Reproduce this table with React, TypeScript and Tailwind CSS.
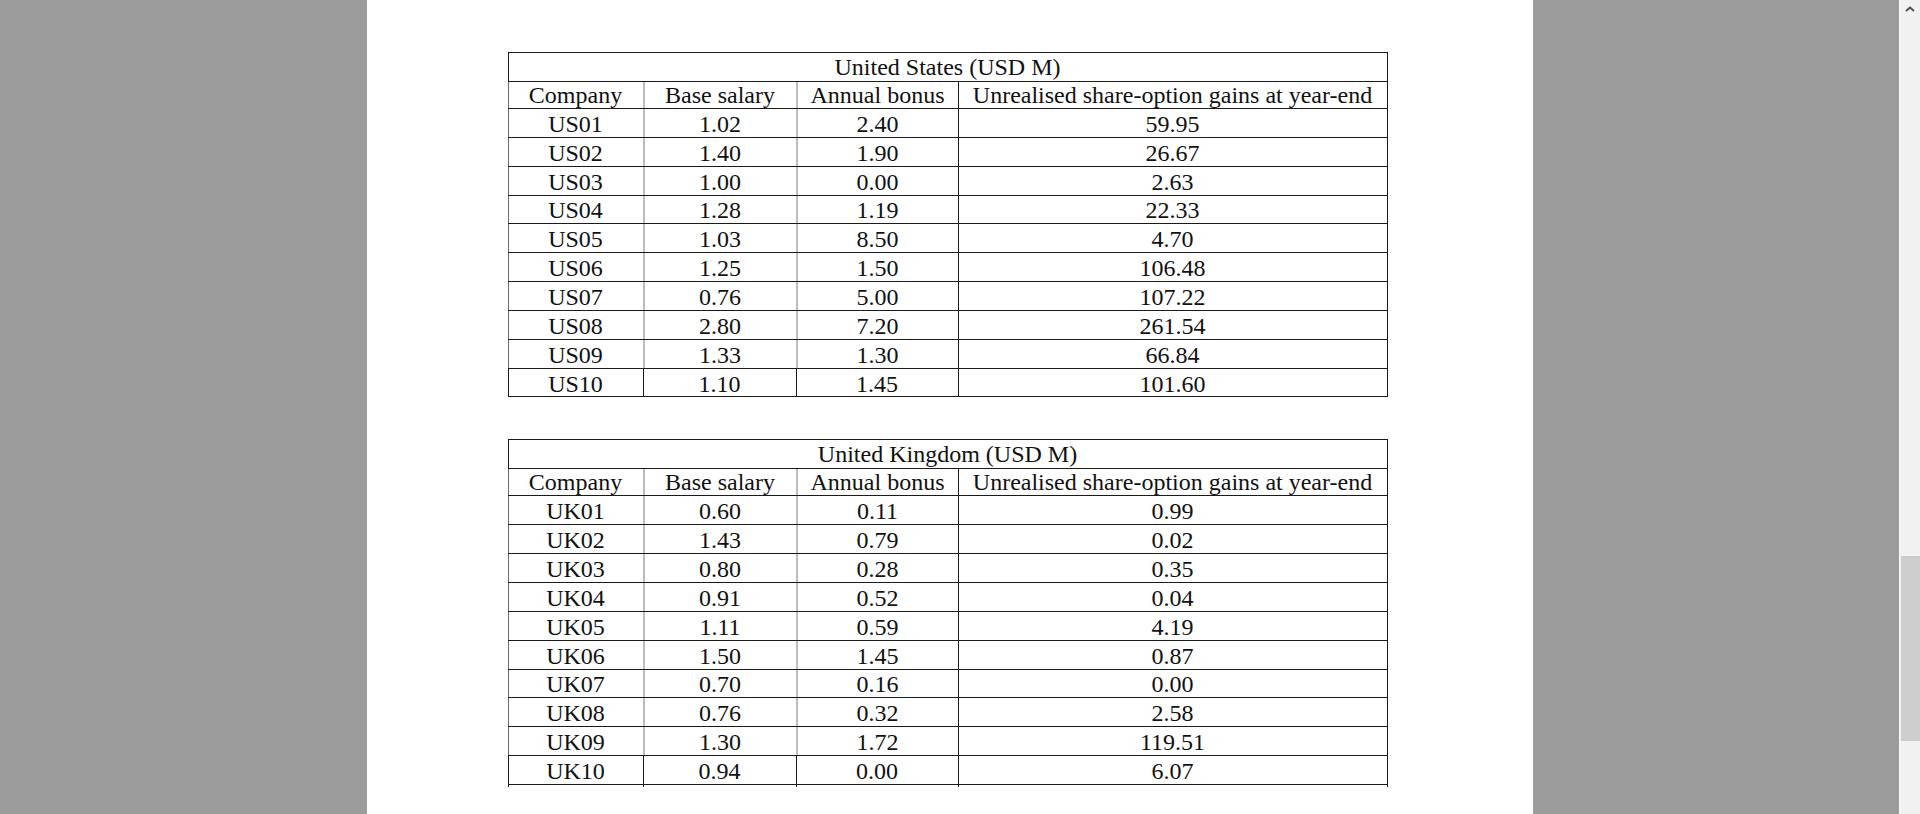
import React from "react";

type Row = [string, string, string, string];

const us: Row[] = [
  ["US01", "1.02", "2.40", "59.95"],
  ["US02", "1.40", "1.90", "26.67"],
  ["US03", "1.00", "0.00", "2.63"],
  ["US04", "1.28", "1.19", "22.33"],
  ["US05", "1.03", "8.50", "4.70"],
  ["US06", "1.25", "1.50", "106.48"],
  ["US07", "0.76", "5.00", "107.22"],
  ["US08", "2.80", "7.20", "261.54"],
  ["US09", "1.33", "1.30", "66.84"],
  ["US10", "1.10", "1.45", "101.60"],
];

const uk: Row[] = [
  ["UK01", "0.60", "0.11", "0.99"],
  ["UK02", "1.43", "0.79", "0.02"],
  ["UK03", "0.80", "0.28", "0.35"],
  ["UK04", "0.91", "0.52", "0.04"],
  ["UK05", "1.11", "0.59", "4.19"],
  ["UK06", "1.50", "1.45", "0.87"],
  ["UK07", "0.70", "0.16", "0.00"],
  ["UK08", "0.76", "0.32", "2.58"],
  ["UK09", "1.30", "1.72", "119.51"],
  ["UK10", "0.94", "0.00", "6.07"],
];

function DataRow({ cells, last, header }: { cells: Row; last?: boolean; header?: boolean }) {
  const inner = last ? "border-[#1a1a1a] border-l" : "border-[#bdbdbd] border-l-2";
  const h = header ? "h-[27px]" : "h-[28.85px]";
  const pad = header ? "" : "pt-[2px]";
  return (
    <div className={`flex ${h} border-b border-[#1a1a1a]`}>
      <div className={`w-[135px] flex items-center justify-center border-l ${last ? "border-[#1a1a1a]" : "border-[#6a6a6a]"} ${pad}`}>
        {cells[0]}
      </div>
      <div className={`w-[153px] flex items-center justify-center ${inner} ${pad}`}>{cells[1]}</div>
      <div className={`w-[162px] flex items-center justify-center ${inner} ${pad}`}>{cells[2]}</div>
      <div className={`flex-1 flex items-center justify-center border-l border-[#1a1a1a] ${pad}`}>{cells[3]}</div>
    </div>
  );
}

function DataTable({ title, rows, tail }: { title: string; rows: Row[]; tail?: boolean }) {
  return (
    <div className="w-[880px]">
      <div className="border-t border-r border-[#1a1a1a]">
        <div className="h-[29px] flex items-center justify-center border-b border-l border-[#1a1a1a]">
          {title}
        </div>
        <DataRow header cells={["Company", "Base salary", "Annual bonus", "Unrealised share-option gains at year-end"]} />
        {rows.map((r, i) => (
          <DataRow key={r[0]} cells={r} last={i === rows.length - 1} />
        ))}
      </div>
      {tail && (
        <div className="flex h-[2px]">
          <div className="w-[135px] border-l border-[#1a1a1a]" />
          <div className="w-[153px] border-l border-[#1a1a1a]" />
          <div className="w-[162px] border-l border-[#1a1a1a]" />
          <div className="flex-1 border-l border-r border-[#1a1a1a]" />
        </div>
      )}
    </div>
  );
}

export default function App() {
  return (
    <div className="flex h-[814px] w-[1920px] overflow-hidden bg-[#9b9b9b]">
      <div className="flex-1 flex justify-center">
        <div
          className="w-[1166px] h-full bg-white pl-[141px] pt-[52px] text-[24px] text-[#111]"
          style={{ fontFamily: '"Liberation Serif", "Times New Roman", serif' }}
        >
          <DataTable title="United States (USD M)" rows={us} />
          <div className="h-[42px]" />
          <DataTable title="United Kingdom (USD M)" rows={uk} tail />
        </div>
      </div>
      <div className="w-[21px] h-full bg-[#f1f1f1] border-l border-[#f9f9f9] flex flex-col items-center">
        <div className="h-[17px] w-full flex items-center justify-center">
          <svg width="10" height="6" viewBox="0 0 10 6">
            <polyline points="1,5 5,1.5 9,5" fill="none" stroke="#505050" strokeWidth="2" />
          </svg>
        </div>
        <div className="h-[539px]" />
        <div className="w-[19px] h-[185px] bg-[#cdcdcd]" />
      </div>
    </div>
  );
}
